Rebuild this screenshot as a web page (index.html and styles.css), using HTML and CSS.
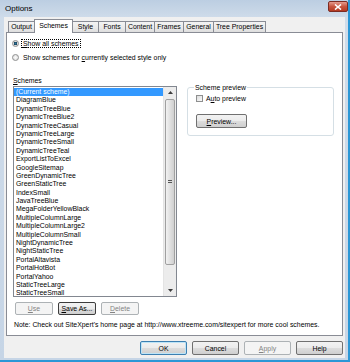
FILE: index.html
```html
<!DOCTYPE html>
<html lang="en">
<head>
    <meta charset="UTF-8">
    <title>Options</title>
    <link rel="stylesheet" href="styles.css">
</head>
<body>

    <div class="window">
        <div class="titlebar">
            <span class="title">Options</span>
            <span class="close">
                <svg width="8" height="6" viewBox="0 0 8 6"><path d="M1 0.5 L7 5.5 M7 0.5 L1 5.5" stroke="#fff" stroke-width="1.6"/></svg>
            </span>
        </div>

        <div class="client">
            <div class="tabs">
                <div class="tab" style="width:27px">Output</div>
                <div class="tab active" style="width:39px">Schemes</div>
                <div class="tab" style="width:27px">Style</div>
                <div class="tab" style="width:28px">Fonts</div>
                <div class="tab" style="width:30px">Content</div>
                <div class="tab" style="width:30px">Frames</div>
                <div class="tab" style="width:31px">General</div>
                <div class="tab" style="width:53px">Tree Properties</div>
            </div>

            <div class="panel">
                <div class="radio-row">
                    <span class="radio checked"></span>
                    <span class="focus"><u>S</u>how all schemes</span>
                </div>
                <div class="radio-row">
                    <span class="radio"></span>
                    <span>Show schemes for <u>c</u>urrently selected style only</span>
                </div>

                <div class="schemes">
                    <div class="left">
                        <div class="label"><u>S</u>chemes</div>
                        <div class="listbox">
                            <ul class="items">
                                <li class="selected">(Current scheme)</li>
                                <li>DiagramBlue</li>
                                <li>DynamicTreeBlue</li>
                                <li>DynamicTreeBlue2</li>
                                <li>DynamicTreeCasual</li>
                                <li>DynamicTreeLarge</li>
                                <li>DynamicTreeSmall</li>
                                <li>DynamicTreeTeal</li>
                                <li>ExportListToExcel</li>
                                <li>GoogleSitemap</li>
                                <li>GreenDynamicTree</li>
                                <li>GreenStaticTree</li>
                                <li>IndexSmall</li>
                                <li>JavaTreeBlue</li>
                                <li>MegaFolderYellowBlack</li>
                                <li>MultipleColumnLarge</li>
                                <li>MultipleColumnLarge2</li>
                                <li>MultipleColumnSmall</li>
                                <li>NightDynamicTree</li>
                                <li>NightStaticTree</li>
                                <li>PortalAltavista</li>
                                <li>PortalHotBot</li>
                                <li>PortalYahoo</li>
                                <li>StaticTreeLarge</li>
                                <li>StaticTreeSmall</li>
                            </ul>
                            <div class="scrollbar">
                                <div class="arrow"><svg width="5" height="3" viewBox="0 0 5 3"><path d="M0 3 L2.5 0 L5 3 Z" fill="#3c3c3c"/></svg></div>
                                <div class="track">
                                    <div class="thumb"><span class="grip"></span></div>
                                </div>
                                <div class="arrow"><svg width="5" height="3" viewBox="0 0 5 3"><path d="M0 0 L2.5 3 L5 0 Z" fill="#3c3c3c"/></svg></div>
                            </div>
                        </div>
                        <div class="list-buttons">
                            <button class="btn disabled"><u>U</u>se</button>
                            <button class="btn focused"><u>S</u>ave As...</button>
                            <button class="btn disabled"><u>D</u>elete</button>
                        </div>
                    </div>

                    <div class="right">
                        <fieldset class="group">
                            <legend>Scheme preview</legend>
                            <div class="check-row">
                                <span class="checkbox"></span>
                                <span>A<u>u</u>to preview</span>
                            </div>
                            <button class="btn preview"><u>P</u>review...</button>
                        </fieldset>
                    </div>
                </div>

                <div class="note">Note: Check out SiteXpert's home page at http://www.xtreeme.com/sitexpert for more cool schemes.</div>
            </div>

            <div class="dialog-buttons">
                <button class="btn default">OK</button>
                <button class="btn">Cancel</button>
                <button class="btn disabled"><u>A</u>pply</button>
                <button class="btn">Help</button>
            </div>
        </div>
    </div>

</body>
</html>
```

FILE: styles.css
```css
        body {
            margin: 0;
            font-family: "Liberation Sans", Arial, sans-serif;
            font-size: 6.9px;
            color: #000;
            background: #fff;
        }

        .window {
            width: 350px;
            height: 362px;
            box-sizing: border-box;
            display: flex;
            flex-direction: column;
            background: linear-gradient(#bccee2, #cfdcea 18px, #c6d5e6);
            border-right: 2px solid #2b97d6;
            border-bottom: 2px solid #2b97d6;
        }

        .titlebar {
            height: 17px;
            display: flex;
            align-items: center;
            justify-content: space-between;
            padding: 0 0 0 5px;
        }

        .title {
            font-size: 8px;
            margin-top: -1px;
        }

        .close {
            width: 18px;
            height: 9px;
            margin-top: -4px;
            border: 1px solid #7c2b22;
            border-radius: 2px;
            background: linear-gradient(#e49b8e, #c8553f 50%, #b33a22);
            display: flex;
            align-items: center;
            justify-content: center;
        }

        .client {
            flex: 1;
            margin: 0 3px 2px 4px;
            padding: 2px 2px 0 2px;
            background: #f0f0f0;
            display: flex;
            flex-direction: column;
        }

        .tabs {
            height: 13px;
            display: flex;
            align-items: flex-end;
            padding-left: 2px;
            position: relative;
            z-index: 1;
        }

        .tab {
            height: 11px;
            box-sizing: border-box;
            border: 1px solid #898c95;
            border-bottom: none;
            margin-right: -1px;
            background: linear-gradient(#f3f3f3, #ebebeb 50%, #dedede);
            text-align: center;
            line-height: 10px;
            white-space: nowrap;
        }

        .tab.active {
            height: 14px;
            margin-bottom: -1px;
            background: #fff;
            line-height: 11px;
            position: relative;
        }

        .panel {
            width: 337px;
            height: 304px;
            box-sizing: border-box;
            border: 1px solid #898c95;
            background: #fff;
            padding: 5px 0 0 5px;
        }

        .radio-row {
            height: 10px;
            display: flex;
            align-items: center;
            gap: 4px;
            margin-bottom: 4px;
        }

        .radio {
            width: 7px;
            height: 7px;
            box-sizing: border-box;
            border: 1px solid #8e8f8f;
            border-radius: 50%;
            background: radial-gradient(#fafafa, #dcdcdc);
        }

        .radio.checked {
            background: radial-gradient(#2f7a9c 0, #1b4460 1.5px, #dcdcdc 2px);
        }

        .focus {
            outline: 1px dotted #000;
            outline-offset: 0;
            padding: 0 1px;
            margin-left: -1px;
        }

        .schemes {
            display: flex;
            margin-top: 15px;
        }

        .left {
            width: 164px;
            margin-left: 1px;
        }

        .label {
            height: 8px;
            line-height: 8px;
            margin-bottom: 1px;
        }

        .listbox {
            height: 211px;
            box-sizing: border-box;
            border: 1px solid #828790;
            display: flex;
            background: #fff;
        }

        .items {
            flex: 1;
            list-style: none;
            margin: 0;
            padding: 1px 0 0 0;
            overflow: hidden;
        }

        .items li {
            height: 8.4px;
            line-height: 8.4px;
            padding-left: 2px;
            white-space: nowrap;
        }

        .items li.selected {
            background: #3399ff;
            color: #fff;
        }

        .scrollbar {
            width: 12px;
            display: flex;
            flex-direction: column;
            background: #ececec;
            border-left: 1px solid #e4e4e4;
        }

        .arrow {
            height: 11px;
            display: flex;
            align-items: center;
            justify-content: center;
        }

        .track {
            flex: 1;
            padding: 1px 0 20px;
            display: flex;
        }

        .thumb {
            flex: 1;
            margin: 0 1px;
            border: 1px solid #a0a0a0;
            border-radius: 2px;
            background: linear-gradient(90deg, #f2f2f2, #e0e0e0 50%, #d0d0d0);
            display: flex;
            align-items: center;
            justify-content: center;
        }

        .grip {
            width: 4px;
            height: 4px;
            background: repeating-linear-gradient(#555 0 1px, transparent 1px 2px);
        }

        .list-buttons {
            display: flex;
            gap: 5px;
            margin: 5px 0 0 2px;
        }

        .btn {
            height: 13px;
            width: 38px;
            padding: 0;
            font-family: inherit;
            font-size: 6.9px;
            color: #000;
            border: 1px solid #707070;
            border-radius: 2px;
            background: linear-gradient(#f2f2f2, #ebebeb 50%, #dddddd 50%, #cfcfcf);
        }

        .btn.disabled {
            color: #838383;
            border-color: #adb2b5;
            background: #f4f4f4;
        }

        .btn.focused {
            border-color: #3c3c3c;
        }

        .btn.default {
            border-color: #3c7fb1;
            box-shadow: inset 0 0 0 1px #bde4f7;
        }

        .right {
            width: 147px;
            margin-left: 10px;
        }

        .group {
            height: 52px;
            box-sizing: border-box;
            margin: 7px 0 0 0;
            padding: 3px 0 0 8px;
            border: 1px solid #d5dfe5;
            border-radius: 3px;
        }

        .group legend {
            padding: 0 1px;
            margin-left: -2px;
            line-height: 7px;
        }

        .check-row {
            display: flex;
            align-items: center;
            gap: 3px;
            height: 9px;
        }

        .checkbox {
            width: 7px;
            height: 7px;
            box-sizing: border-box;
            border: 1px solid #8e8f8f;
            background: linear-gradient(135deg, #dcdcdc, #fafafa);
        }

        .btn.preview {
            width: 51px;
            height: 14px;
            margin-top: 11px;
        }

        .note {
            margin: 6px 0 0 2px;
        }

        .dialog-buttons {
            display: flex;
            justify-content: flex-end;
            gap: 5px;
            margin-top: 5px;
        }

        .dialog-buttons .btn {
            width: 47px;
            height: 14px;
        }
```
